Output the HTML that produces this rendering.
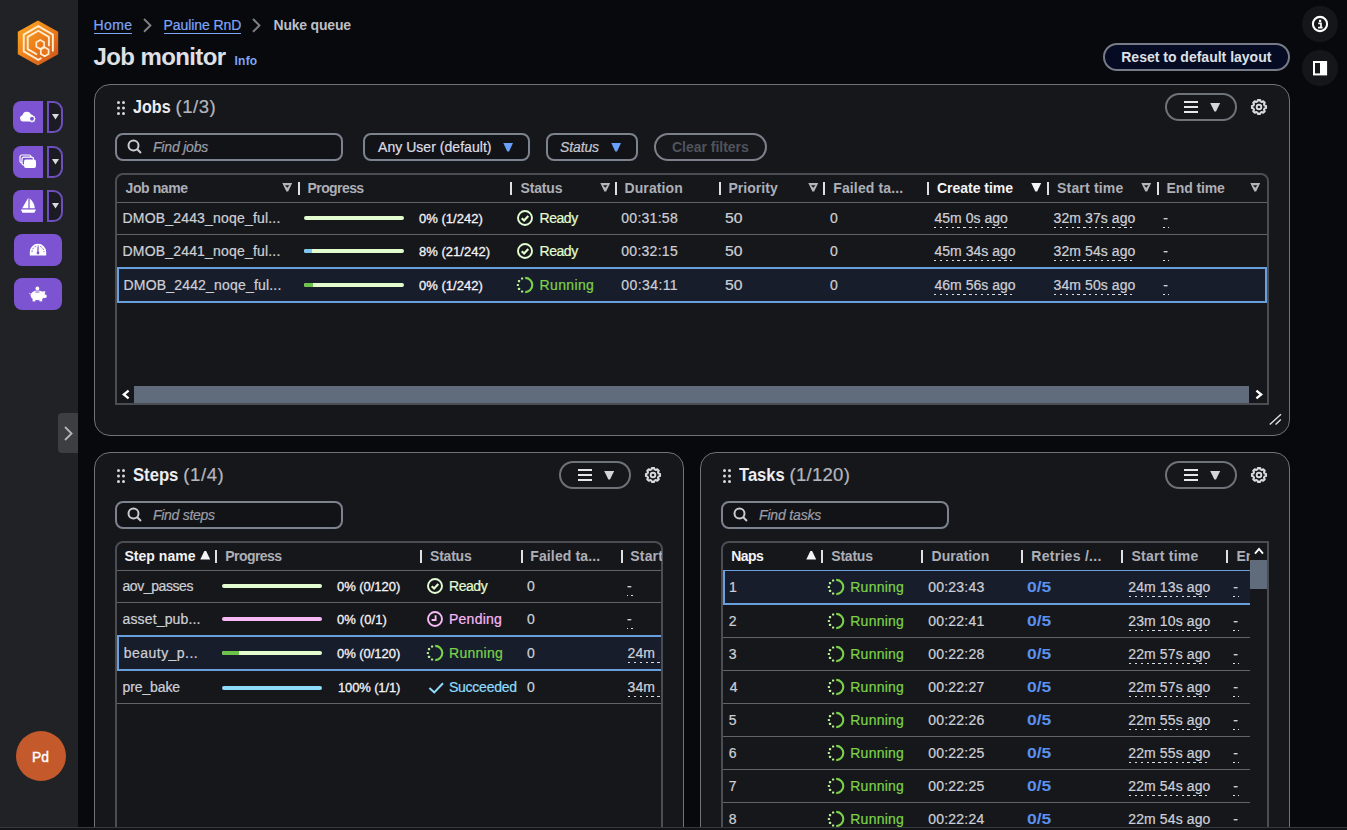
<!DOCTYPE html>
<html lang="en"><head><meta charset="utf-8"><title>Job monitor</title>
<style>
html,body{margin:0;padding:0}
body{width:1347px;height:830px;overflow:hidden;position:relative;background:#08090c;font-family:"Liberation Sans",sans-serif;color:#cdcfd6}
div,svg,span,a,h1,h2,button,nav,section,header,aside,main{position:absolute;box-sizing:border-box;margin:0;padding:0}
nav,section,header,aside,main{left:0;top:0}
button{background:transparent;border:0;font:inherit;color:inherit;appearance:none;-webkit-appearance:none;outline:0}
.t{white-space:nowrap;transform-origin:0 0;font-weight:400;text-decoration:none;-webkit-text-stroke:.22px}
.b{font-weight:700;-webkit-text-stroke:0}
svg{overflow:visible}
</style></head><body>
<aside>
<div style="left:0px;top:0px;width:78px;height:830px;background:#202226"></div>
<svg style="left:17px;top:20px;" width="42" height="46" viewBox="0 0 42 46"><defs><linearGradient id="lg" x1="0.1" y1="0.1" x2="0.9" y2="0.95"><stop offset="0" stop-color="#f8a324"/><stop offset="0.5" stop-color="#ec7d1a"/><stop offset="1" stop-color="#cf541b"/></linearGradient></defs>
<path d="M21 0.4L41.2 11.8V34.2L21 45.6L0.8 34.2V11.8Z" fill="url(#lg)"/>
<path d="M35.85 31.40L35.85 14.60L21.30 6.20L6.75 14.60L6.75 31.40L21.30 39.80L24.50 37.95" fill="none" stroke="#ffeccf" stroke-width="1.9"/>
<path d="M31.87 26.17L31.87 16.90L21.30 10.80L10.73 16.90L10.73 29.10L20.03 34.47" fill="none" stroke="#ffeccf" stroke-width="1.9"/>
<path d="M23.20 19.90L27.10 22.15L27.10 26.65L23.20 28.90L19.30 26.65L19.30 22.15Z" fill="none" stroke="#ffeccf" stroke-width="1.7"/>
<path d="M27.70 27.30L31.60 29.55L31.60 34.05L27.70 36.30L23.80 34.05L23.80 29.55Z" fill="#e7741b" stroke="#ffeccf" stroke-width="1.7"/></svg>
<button class="sb" style="left:13px;top:101px;width:30px;height:32px;background:#7c53d1;border-radius:8px 0 0 8px"><svg style="left:6px;top:8px;" width="19" height="15" viewBox="0 0 19 15"><path d="M3.9 12.6A3.2 3.2 0 0 1 3.5 6.3A4.5 4.5 0 0 1 11.9 5.3A3.3 3.3 0 0 1 14.6 8.4L14.6 12.6Z" fill="#ffffff"/><circle cx="13" cy="9.8" r="2.5" fill="#7c53d1" stroke="#ffffff" stroke-width="1.1"/><path d="M13 6.4V7.4M13 12.2V13.4M9.6 9.8H10.6M15.4 9.8H16.6M10.6 7.4L11.3 8.1M14.8 11.6L15.6 12.4M15.4 7.4L14.7 8.1M10.6 12.2L11.3 11.5" stroke="#ffffff" stroke-width="1.1"/></svg></button>
<button style="left:47px;top:101px;width:16px;height:32px;background:#1b1b23;border:2.4px solid #6c4fba;border-radius:0 9.5px 9.5px 0"><svg style="left:2.5px;top:11px;" width="7" height="6" viewBox="0 0 7 6"><path d="M0 0H7L3.5 5.5Z" fill="#d9d9e0"/></svg></button>
<button class="sb" style="left:13px;top:146px;width:30px;height:32px;background:#7c53d1;border-radius:8px 0 0 8px"><svg style="left:6px;top:8px;" width="18" height="15" viewBox="0 0 18 15"><rect x="1" y="1" width="11" height="8" rx="2" fill="none" stroke="#ffffff" stroke-width="1.2"/><rect x="3" y="3.2" width="11.5" height="8" rx="2" fill="#7c53d1" stroke="#ffffff" stroke-width="1.2"/><rect x="5" y="5.4" width="12" height="8.6" rx="2" fill="#ffffff"/></svg></button>
<button style="left:47px;top:146px;width:16px;height:32px;background:#1b1b23;border:2.4px solid #6c4fba;border-radius:0 9.5px 9.5px 0"><svg style="left:2.5px;top:11px;" width="7" height="6" viewBox="0 0 7 6"><path d="M0 0H7L3.5 5.5Z" fill="#d9d9e0"/></svg></button>
<button class="sb" style="left:13px;top:190px;width:30px;height:32px;background:#7c53d1;border-radius:8px 0 0 8px"><svg style="left:7px;top:7px;" width="17" height="17" viewBox="0 0 17 17"><path d="M8.4 0.6V11.2H2.2Z" fill="#ffffff"/><path d="M9.6 1.4C13 4 14.6 7.6 14.8 11.2H9.6Z" fill="#ffffff"/><path d="M0.8 12.6H16L14.4 15.8H2.4Z" fill="#ffffff"/></svg></button>
<button style="left:47px;top:190px;width:16px;height:32px;background:#1b1b23;border:2.4px solid #6c4fba;border-radius:0 9.5px 9.5px 0"><svg style="left:2.5px;top:11px;" width="7" height="6" viewBox="0 0 7 6"><path d="M0 0H7L3.5 5.5Z" fill="#d9d9e0"/></svg></button>
<button style="left:14px;top:234px;width:48px;height:32px;background:#7c53d1;border-radius:8px"><svg style="left:15px;top:9px;" width="18" height="13" viewBox="0 0 18 13"><path d="M0.8 12.4V9A8.2 8.2 0 0 1 17.2 9V12.4Z" fill="#ffffff"/><path d="M3 9A6 6 0 0 1 15 9" fill="none" stroke="#7c53d1" stroke-width="1" stroke-dasharray="1.6 1.3"/><path d="M9 4V10" stroke="#7c53d1" stroke-width="1.3"/><circle cx="9" cy="10" r="1.4" fill="#7c53d1"/></svg></button>
<button style="left:14px;top:278px;width:48px;height:32px;background:#7c53d1;border-radius:8px"><svg style="left:15px;top:8px;" width="18" height="16" viewBox="0 0 18 16"><circle cx="8.4" cy="2.4" r="1.9" fill="#ffffff"/><ellipse cx="8.6" cy="9.4" rx="7" ry="4.9" fill="#ffffff"/><path d="M13 5.6L16.4 5.2L15.6 8.2L17.6 9V11.6L15 12.2Z" fill="#ffffff"/><rect x="3.6" y="12.4" width="2.8" height="3" fill="#ffffff"/><rect x="10.4" y="12.4" width="2.8" height="3" fill="#ffffff"/><path d="M6.4 6H10.4" stroke="#7c53d1" stroke-width="1"/><path d="M1.6 8.4L0.4 7" stroke="#ffffff" stroke-width="1"/></svg></button>
<button style="left:58px;top:413px;width:20px;height:40px;background:#3c3e42;border-radius:4px 0 0 4px"><svg style="left:5.5px;top:12.6px;" width="9" height="15" viewBox="0 0 9 15"><path d="M1 1L7.6 7.5L1 14" fill="none" stroke="#b4b5bb" stroke-width="1.8"/></svg></button>
<div style="left:16px;top:731px;width:50px;height:50px;background:#c4592b;border-radius:50%"></div>
<span class="t" style="left:32.0px;top:750px;font-size:14px;line-height:14px;color:#ffffff;transform:scaleX(0.987);-webkit-text-stroke:0.4px #fff;">Pd</span>
</aside>
<header>
<nav>
<a class="t" style="left:93.5px;top:18px;font-size:14px;line-height:14px;color:#7ea4f4;letter-spacing:0.400px;">Home</a>
<div style="left:94px;top:33px;width:38px;height:1px;background:#7ea4f4"></div>
<svg style="left:143.3px;top:18px;" width="9" height="15" viewBox="0 0 9 15"><path d="M1 1L7.4 7.4L1 13.8" fill="none" stroke="#7d7f88" stroke-width="2"/></svg>
<a class="t" style="left:163.5px;top:18px;font-size:14px;line-height:14px;color:#7ea4f4;letter-spacing:-0.080px;">Pauline RnD</a>
<div style="left:164px;top:33px;width:77px;height:1px;background:#7ea4f4"></div>
<svg style="left:252px;top:18px;" width="9" height="15" viewBox="0 0 9 15"><path d="M1 1L7.4 7.4L1 13.8" fill="none" stroke="#7d7f88" stroke-width="2"/></svg>
<span class="t b" style="left:273.5px;top:18px;font-size:14px;line-height:14px;color:#bdbfc6;letter-spacing:-0.200px;">Nuke queue</span>
</nav>
<h1 class="t b" style="left:93.5px;top:45px;font-size:24px;line-height:24px;color:#dfe0e5;letter-spacing:-0.600px;">Job monitor</h1>
<a class="t b" style="left:234.5px;top:55px;font-size:12px;line-height:12px;color:#7ea4f4;letter-spacing:0.233px;">Info</a>
<button style="left:1103px;top:43px;width:187px;height:28px;border:2px solid #767b87;border-radius:14px;background:#050b22"></button>
<span class="t b" style="left:1121.25px;top:50px;font-size:14px;line-height:14px;color:#dfe0e6;">Reset to default layout</span>
<button style="left:1302px;top:6px;width:36px;height:36px;border-radius:50%;background:#15161a"><svg style="left:9.9px;top:9.7px;" width="16" height="16" viewBox="0 0 16 16"><circle cx="8" cy="8" r="7.1" fill="none" stroke="#fff" stroke-width="2.1"/><rect x="7" y="3.8" width="2.2" height="2.2" fill="#fff"/><path d="M6.2 7.4H9V11.4M6 11.6H10.6" stroke="#fff" stroke-width="1.7" fill="none"/></svg></button>
<button style="left:1302px;top:50px;width:36px;height:36px;border-radius:50%;background:#15161a"><svg style="left:10.9px;top:10.75px;" width="15" height="15" viewBox="0 0 15 15"><rect x="1" y="1" width="12.1" height="12.4" fill="none" stroke="#fff" stroke-width="2"/><rect x="7" y="1" width="6.1" height="12.4" fill="#fff"/></svg></button>
</header>
<section>
<div style="left:94px;top:84px;width:1196px;height:352px;background:#16171b;border:1px solid #707279;border-radius:16px"></div>
<svg style="left:117px;top:101px;" width="9" height="15" viewBox="0 0 9 15"><circle cx="1.5" cy="1.5" r="1.5" fill="#d5d6dc"/><circle cx="6.5" cy="1.5" r="1.5" fill="#d5d6dc"/><circle cx="1.5" cy="7.0" r="1.5" fill="#d5d6dc"/><circle cx="6.5" cy="7.0" r="1.5" fill="#d5d6dc"/><circle cx="1.5" cy="12.5" r="1.5" fill="#d5d6dc"/><circle cx="6.5" cy="12.5" r="1.5" fill="#d5d6dc"/></svg>
<h2 class="t b" style="left:132.5px;top:98px;font-size:18.5px;line-height:18.5px;color:#ececf1;transform:scaleX(0.871);">Jobs</h2>
<span class="t" style="left:175.5px;top:98px;font-size:18.5px;line-height:18.5px;color:#b4b6be;letter-spacing:0.550px;">(1/3)</span>
<button style="left:1165px;top:93px;width:72px;height:28px;border:2px solid #6e7279;border-radius:14px"><svg style="left:17px;top:6px;" width="14" height="12" viewBox="0 0 14 12"><path d="M0 1H14M0 6H14M0 11H14" stroke="#e6e7ec" stroke-width="2"/></svg><svg style="left:42.8px;top:8.2px;" width="10.4" height="8.6" viewBox="0 0 10.4 8.6"><path d="M0.2 0H10.2L6 8.6H4.4Z" fill="#d4d5db"/></svg></button>
<svg style="left:1250.3px;top:98px;" width="18" height="18" viewBox="0 0 18 18"><path d="M7.53 3.44 L7.88 1.94 L10.12 1.94 L10.47 3.44 L11.89 4.03 L13.20 3.22 L14.78 4.80 L13.97 6.11 L14.56 7.53 L16.06 7.88 L16.06 10.12 L14.56 10.47 L13.97 11.89 L14.78 13.20 L13.20 14.78 L11.89 13.97 L10.47 14.56 L10.12 16.06 L7.88 16.06 L7.53 14.56 L6.11 13.97 L4.80 14.78 L3.22 13.20 L4.03 11.89 L3.44 10.47 L1.94 10.12 L1.94 7.88 L3.44 7.53 L4.03 6.11 L3.22 4.80 L4.80 3.22 L6.11 4.03Z" fill="none" stroke="#d9dae0" stroke-width="2" stroke-linejoin="round"/><circle cx="9" cy="9" r="2.3" fill="none" stroke="#d9dae0" stroke-width="1.9"/></svg>
<div style="left:115px;top:133px;width:228px;height:28px;border:2px solid #7c828e;border-radius:8px;background:#121317"></div>
<svg style="left:127.3px;top:139.3px;" width="16" height="16" viewBox="0 0 16 16"><circle cx="6.5" cy="6.5" r="5" fill="none" stroke="#c9cbd2" stroke-width="2"/><path d="M10.2 10.2L14 14" stroke="#c9cbd2" stroke-width="2" stroke-linecap="butt"/></svg>
<span class="t" style="left:153.0px;top:140px;font-size:14px;line-height:14px;font-style:italic;color:#9b9da6;letter-spacing:-0.187px;">Find jobs</span>
<button style="left:363px;top:133px;width:167px;height:28px;border:2px solid #7c828e;border-radius:8px;background:#121317"></button>
<span class="t" style="left:378.0px;top:140px;font-size:14px;line-height:14px;color:#dcdde3;letter-spacing:0.041px;">Any User (default)</span>
<svg style="left:502.8px;top:142.8px;" width="10.3" height="8.4" viewBox="0 0 10.3 8.4"><path d="M0.3 0H10.0L6.050000000000001 8.4H4.25Z" fill="#68a0fc"/></svg>
<button style="left:546px;top:133px;width:92px;height:28px;border:2px solid #7c828e;border-radius:8px;background:#121317"></button>
<span class="t" style="left:560.0px;top:140px;font-size:14px;line-height:14px;font-style:italic;color:#c4c6ce;letter-spacing:-0.120px;">Status</span>
<svg style="left:610.8px;top:142.8px;" width="10.3" height="8.4" viewBox="0 0 10.3 8.4"><path d="M0.3 0H10.0L6.050000000000001 8.4H4.25Z" fill="#68a0fc"/></svg>
<button style="left:654px;top:133px;width:113px;height:28px;border:2px solid #7b808a;border-radius:14px"></button>
<span class="t b" style="left:672.0px;top:140px;font-size:14px;line-height:14px;color:#50535b;letter-spacing:-0.025px;">Clear filters</span>
<div style="left:115px;top:173px;width:1154px;height:232px;border:2px solid #4b4d54;border-radius:8px 8px 0 0;background:#16171b"></div>
<span class="t b" style="left:125.5px;top:181px;font-size:14px;line-height:14px;color:#adafb7;letter-spacing:-0.400px;">Job name</span>
<svg style="left:282.2px;top:182.8px;" width="10.5" height="8.5" viewBox="0 0 10.5 8.5"><path d="M0.3 0H10.2L6.15 8.5H4.35ZM3.05 2.3L5.25 4.7L7.45 2.3Z" fill="#b4b5bb" fill-rule="evenodd"/></svg>
<div style="left:297.5px;top:182px;width:2px;height:13px;background:#dfe0e6"></div>
<span class="t b" style="left:307.5px;top:181px;font-size:14px;line-height:14px;color:#adafb7;letter-spacing:-0.579px;">Progress</span>
<div style="left:510px;top:182px;width:2px;height:13px;background:#dfe0e6"></div>
<span class="t b" style="left:520.5px;top:181px;font-size:14px;line-height:14px;color:#adafb7;letter-spacing:-0.160px;">Status</span>
<svg style="left:600.2px;top:182.8px;" width="10.5" height="8.5" viewBox="0 0 10.5 8.5"><path d="M0.3 0H10.2L6.15 8.5H4.35ZM3.05 2.3L5.25 4.7L7.45 2.3Z" fill="#b4b5bb" fill-rule="evenodd"/></svg>
<div style="left:615px;top:182px;width:2px;height:13px;background:#dfe0e6"></div>
<span class="t b" style="left:624.5px;top:181px;font-size:14px;line-height:14px;color:#adafb7;letter-spacing:0.100px;">Duration</span>
<div style="left:719px;top:182px;width:2px;height:13px;background:#dfe0e6"></div>
<span class="t b" style="left:728.5px;top:181px;font-size:14px;line-height:14px;color:#adafb7;letter-spacing:0.029px;">Priority</span>
<svg style="left:808.2px;top:182.8px;" width="10.5" height="8.5" viewBox="0 0 10.5 8.5"><path d="M0.3 0H10.2L6.15 8.5H4.35ZM3.05 2.3L5.25 4.7L7.45 2.3Z" fill="#b4b5bb" fill-rule="evenodd"/></svg>
<div style="left:823px;top:182px;width:2px;height:13px;background:#dfe0e6"></div>
<span class="t b" style="left:833.25px;top:181px;font-size:14px;line-height:14px;color:#adafb7;letter-spacing:0.132px;">Failed ta...</span>
<div style="left:927px;top:182px;width:2px;height:13px;background:#dfe0e6"></div>
<span class="t b" style="left:937.0px;top:181px;font-size:14px;line-height:14px;color:#f4f4f7;letter-spacing:-0.030px;">Create time</span>
<svg style="left:1030.7px;top:182.8px;" width="10.5" height="8.5" viewBox="0 0 10.5 8.5"><path d="M0.3 0H10.2L6.15 8.5H4.35Z" fill="#f4f4f7"/></svg>
<div style="left:1046.5px;top:182px;width:2px;height:13px;background:#dfe0e6"></div>
<span class="t b" style="left:1057.0px;top:181px;font-size:14px;line-height:14px;color:#adafb7;letter-spacing:0.189px;">Start time</span>
<svg style="left:1141.2px;top:182.8px;" width="10.5" height="8.5" viewBox="0 0 10.5 8.5"><path d="M0.3 0H10.2L6.15 8.5H4.35ZM3.05 2.3L5.25 4.7L7.45 2.3Z" fill="#b4b5bb" fill-rule="evenodd"/></svg>
<div style="left:1156.75px;top:182px;width:2px;height:13px;background:#dfe0e6"></div>
<span class="t b" style="left:1166.5px;top:181px;font-size:14px;line-height:14px;color:#adafb7;letter-spacing:-0.114px;">End time</span>
<svg style="left:1250.2px;top:182.8px;" width="10.5" height="8.5" viewBox="0 0 10.5 8.5"><path d="M0.3 0H10.2L6.15 8.5H4.35ZM3.05 2.3L5.25 4.7L7.45 2.3Z" fill="#b4b5bb" fill-rule="evenodd"/></svg>
<div style="left:117px;top:202px;width:1150px;height:1px;background:#62646b"></div>
<div style="left:117px;top:234px;width:1150px;height:1px;background:#62646b"></div>
<div style="left:117px;top:267px;width:1150px;height:36px;background:#181d2c;border:2px solid #689fdc"></div>
<span class="t" style="left:122.5px;top:211px;font-size:14px;line-height:14px;letter-spacing:0.185px;">DMOB_2443_noqe_ful...</span>
<div style="left:304px;top:216px;width:100px;height:4px;border-radius:2px;background:#e2fccf;overflow:hidden"></div>
<span class="t" style="left:419.0px;top:212px;font-size:13px;line-height:13px;color:#f4f4f7;letter-spacing:0.022px;-webkit-text-stroke:0.3px #f4f4f7;">0% (1/242)</span>
<svg style="left:517px;top:209.5px;" width="16" height="16" viewBox="0 0 16 16"><circle cx="8" cy="8" r="7" fill="none" stroke="#e2fccf" stroke-width="1.9"/><path d="M4.7 8.2L7.1 10.5L11.3 5.9" fill="none" stroke="#e2fccf" stroke-width="2.2" stroke-linejoin="miter"/></svg>
<span class="t" style="left:539.5px;top:211px;font-size:14px;line-height:14px;color:#e2fccf;letter-spacing:-0.450px;">Ready</span>
<span class="t" style="left:621.25px;top:211px;font-size:14px;line-height:14px;letter-spacing:0.279px;">00:31:58</span>
<span class="t" style="left:725.25px;top:211px;font-size:14px;line-height:14px;transform:scaleX(1.121);">50</span>
<span class="t" style="left:830.0px;top:211px;font-size:14px;line-height:14px;">0</span>
<span class="t" style="left:934.5px;top:211px;font-size:14px;line-height:14px;letter-spacing:0.022px;">45m 0s ago</span>
<div style="left:934px;top:227px;width:74px;height:1px;background:repeating-linear-gradient(90deg,#dcdee5 0 2.4px,transparent 2.4px 5.85px)"></div>
<span class="t" style="left:1053.5px;top:211px;font-size:14px;line-height:14px;letter-spacing:0.095px;">32m 37s ago</span>
<div style="left:1054px;top:227px;width:81.75px;height:1px;background:repeating-linear-gradient(90deg,#dcdee5 0 2.4px,transparent 2.4px 5.85px)"></div>
<span class="t" style="left:1163.25px;top:211px;font-size:14px;line-height:14px;">-</span>
<div style="left:1163.45px;top:227px;width:1.3px;height:1px;background:#dcdee5"></div><div style="left:1167.65px;top:227px;width:1.3px;height:1px;background:#dcdee5"></div>
<span class="t" style="left:122.5px;top:244px;font-size:14px;line-height:14px;letter-spacing:0.185px;">DMOB_2441_noqe_ful...</span>
<div style="left:304px;top:249px;width:100px;height:4px;border-radius:2px;background:#e2fccf;overflow:hidden"><div style="left:0;top:0;width:8px;height:4px;background:#7cc4f2"></div></div>
<span class="t" style="left:419.0px;top:245px;font-size:13px;line-height:13px;color:#f4f4f7;letter-spacing:0.020px;-webkit-text-stroke:0.3px #f4f4f7;">8% (21/242)</span>
<svg style="left:517px;top:242.5px;" width="16" height="16" viewBox="0 0 16 16"><circle cx="8" cy="8" r="7" fill="none" stroke="#e2fccf" stroke-width="1.9"/><path d="M4.7 8.2L7.1 10.5L11.3 5.9" fill="none" stroke="#e2fccf" stroke-width="2.2" stroke-linejoin="miter"/></svg>
<span class="t" style="left:539.5px;top:244px;font-size:14px;line-height:14px;color:#e2fccf;letter-spacing:-0.450px;">Ready</span>
<span class="t" style="left:621.25px;top:244px;font-size:14px;line-height:14px;letter-spacing:0.279px;">00:32:15</span>
<span class="t" style="left:725.25px;top:244px;font-size:14px;line-height:14px;transform:scaleX(1.121);">50</span>
<span class="t" style="left:830.0px;top:244px;font-size:14px;line-height:14px;">0</span>
<span class="t" style="left:934.5px;top:244px;font-size:14px;line-height:14px;letter-spacing:0.020px;">45m 34s ago</span>
<div style="left:934px;top:260px;width:82px;height:1px;background:repeating-linear-gradient(90deg,#dcdee5 0 2.4px,transparent 2.4px 5.85px)"></div>
<span class="t" style="left:1053.5px;top:244px;font-size:14px;line-height:14px;letter-spacing:0.095px;">32m 54s ago</span>
<div style="left:1054px;top:260px;width:81.75px;height:1px;background:repeating-linear-gradient(90deg,#dcdee5 0 2.4px,transparent 2.4px 5.85px)"></div>
<span class="t" style="left:1163.25px;top:244px;font-size:14px;line-height:14px;">-</span>
<div style="left:1163.45px;top:260px;width:1.3px;height:1px;background:#dcdee5"></div><div style="left:1167.65px;top:260px;width:1.3px;height:1px;background:#dcdee5"></div>
<span class="t" style="left:123.5px;top:278px;font-size:14px;line-height:14px;letter-spacing:0.185px;">DMOB_2442_noqe_ful...</span>
<div style="left:304px;top:283px;width:100px;height:4px;border-radius:2px;background:#e2fccf;overflow:hidden"><div style="left:0;top:0;width:9px;height:4px;background:#6cc349"></div></div>
<span class="t" style="left:419.0px;top:279px;font-size:13px;line-height:13px;color:#f4f4f7;letter-spacing:0.022px;-webkit-text-stroke:0.3px #f4f4f7;">0% (1/242)</span>
<svg style="left:517.4px;top:277.0px;" width="16" height="16" viewBox="0 0 16 16"><path d="M8.2 0.90A7.1 7.1 0 0 1 8.2 15.10" fill="none" stroke="#7bd148" stroke-width="2.1"/><rect x="4.01" y="13.39" width="2.2" height="2.2" rx="0.5" fill="#b9ee92"/><rect x="0.95" y="10.77" width="2.2" height="2.2" rx="0.5" fill="#b9ee92"/><rect x="-0.20" y="6.90" width="2.2" height="2.2" rx="0.5" fill="#b9ee92"/><rect x="0.95" y="3.03" width="2.2" height="2.2" rx="0.5" fill="#b9ee92"/><rect x="4.01" y="0.41" width="2.2" height="2.2" rx="0.5" fill="#b9ee92"/></svg>
<span class="t" style="left:539.5px;top:278px;font-size:14px;line-height:14px;color:#7bd148;letter-spacing:0.367px;">Running</span>
<span class="t" style="left:621.25px;top:278px;font-size:14px;line-height:14px;letter-spacing:0.421px;">00:34:11</span>
<span class="t" style="left:725.25px;top:278px;font-size:14px;line-height:14px;transform:scaleX(1.121);">50</span>
<span class="t" style="left:830.0px;top:278px;font-size:14px;line-height:14px;">0</span>
<span class="t" style="left:934.5px;top:278px;font-size:14px;line-height:14px;letter-spacing:0.020px;">46m 56s ago</span>
<div style="left:934px;top:294px;width:82px;height:1px;background:repeating-linear-gradient(90deg,#dcdee5 0 2.4px,transparent 2.4px 5.85px)"></div>
<span class="t" style="left:1053.5px;top:278px;font-size:14px;line-height:14px;letter-spacing:0.095px;">34m 50s ago</span>
<div style="left:1054px;top:294px;width:81.75px;height:1px;background:repeating-linear-gradient(90deg,#dcdee5 0 2.4px,transparent 2.4px 5.85px)"></div>
<span class="t" style="left:1163.25px;top:278px;font-size:14px;line-height:14px;">-</span>
<div style="left:1163.45px;top:294px;width:1.3px;height:1px;background:#dcdee5"></div><div style="left:1167.65px;top:294px;width:1.3px;height:1px;background:#dcdee5"></div>
<div style="left:134px;top:386px;width:1115px;height:17px;background:#606c7c"></div>
<svg style="left:121.5px;top:390px;" width="8" height="9" viewBox="0 0 8 9"><path d="M6.6 0.6L1.8 4.5L6.6 8.4" fill="none" stroke="#fff" stroke-width="2.3"/></svg>
<svg style="left:1255px;top:390px;" width="8" height="9" viewBox="0 0 8 9"><path d="M1.4 0.6L6.2 4.5L1.4 8.4" fill="none" stroke="#fff" stroke-width="2.3"/></svg>
<svg style="left:1269px;top:413px;" width="14" height="13" viewBox="0 0 14 13"><path d="M0.8 11.6L12 1.2M6.6 11.6L11.8 6.6" stroke="#e0e1e6" stroke-width="1.4" fill="none"/></svg>
</section>
<section>
<div style="left:94px;top:452px;width:590px;height:400px;background:#16171b;border:1px solid #707279;border-radius:16px"></div>
<svg style="left:117px;top:469px;" width="9" height="15" viewBox="0 0 9 15"><circle cx="1.5" cy="1.5" r="1.5" fill="#d5d6dc"/><circle cx="6.5" cy="1.5" r="1.5" fill="#d5d6dc"/><circle cx="1.5" cy="7.0" r="1.5" fill="#d5d6dc"/><circle cx="6.5" cy="7.0" r="1.5" fill="#d5d6dc"/><circle cx="1.5" cy="12.5" r="1.5" fill="#d5d6dc"/><circle cx="6.5" cy="12.5" r="1.5" fill="#d5d6dc"/></svg>
<h2 class="t b" style="left:133.25px;top:466px;font-size:18.5px;line-height:18.5px;color:#ececf1;transform:scaleX(0.901);">Steps</h2>
<span class="t" style="left:183.25px;top:466px;font-size:18.5px;line-height:18.5px;color:#b4b6be;letter-spacing:0.613px;">(1/4)</span>
<button style="left:559px;top:461px;width:72px;height:28px;border:2px solid #6e7279;border-radius:14px"><svg style="left:17px;top:6px;" width="14" height="12" viewBox="0 0 14 12"><path d="M0 1H14M0 6H14M0 11H14" stroke="#e6e7ec" stroke-width="2"/></svg><svg style="left:42.8px;top:8.2px;" width="10.4" height="8.6" viewBox="0 0 10.4 8.6"><path d="M0.2 0H10.2L6 8.6H4.4Z" fill="#d4d5db"/></svg></button>
<svg style="left:644.3px;top:466px;" width="18" height="18" viewBox="0 0 18 18"><path d="M7.53 3.44 L7.88 1.94 L10.12 1.94 L10.47 3.44 L11.89 4.03 L13.20 3.22 L14.78 4.80 L13.97 6.11 L14.56 7.53 L16.06 7.88 L16.06 10.12 L14.56 10.47 L13.97 11.89 L14.78 13.20 L13.20 14.78 L11.89 13.97 L10.47 14.56 L10.12 16.06 L7.88 16.06 L7.53 14.56 L6.11 13.97 L4.80 14.78 L3.22 13.20 L4.03 11.89 L3.44 10.47 L1.94 10.12 L1.94 7.88 L3.44 7.53 L4.03 6.11 L3.22 4.80 L4.80 3.22 L6.11 4.03Z" fill="none" stroke="#d9dae0" stroke-width="2" stroke-linejoin="round"/><circle cx="9" cy="9" r="2.3" fill="none" stroke="#d9dae0" stroke-width="1.9"/></svg>
<div style="left:115px;top:501px;width:228px;height:28px;border:2px solid #7c828e;border-radius:8px;background:#121317"></div>
<svg style="left:127.3px;top:507.3px;" width="16" height="16" viewBox="0 0 16 16"><circle cx="6.5" cy="6.5" r="5" fill="none" stroke="#c9cbd2" stroke-width="2"/><path d="M10.2 10.2L14 14" stroke="#c9cbd2" stroke-width="2" stroke-linecap="butt"/></svg>
<span class="t" style="left:153.0px;top:508px;font-size:14px;line-height:14px;font-style:italic;color:#9b9da6;letter-spacing:-0.278px;">Find steps</span>
<div style="left:115px;top:541px;width:548px;height:300px;border:2px solid #4b4d54;border-radius:8px 8px 0 0;background:#16171b"></div>
<span class="t b" style="left:124.5px;top:549px;font-size:14px;line-height:14px;color:#f4f4f7;letter-spacing:0.025px;">Step name</span>
<svg style="left:199.8px;top:551.2px;" width="10.5" height="8.5" viewBox="0 0 10.5 8.5"><path d="M0.3 8.5H10.2L6.15 0H4.35Z" fill="#f4f4f7"/></svg>
<div style="left:215px;top:550px;width:2px;height:13px;background:#dfe0e6"></div>
<span class="t b" style="left:225.25px;top:549px;font-size:14px;line-height:14px;color:#adafb7;letter-spacing:-0.543px;">Progress</span>
<div style="left:420px;top:550px;width:2px;height:13px;background:#dfe0e6"></div>
<span class="t b" style="left:430.0px;top:549px;font-size:14px;line-height:14px;color:#adafb7;letter-spacing:-0.210px;">Status</span>
<div style="left:520.5px;top:550px;width:2px;height:13px;background:#dfe0e6"></div>
<span class="t b" style="left:530.25px;top:549px;font-size:14px;line-height:14px;color:#adafb7;letter-spacing:0.132px;">Failed ta...</span>
<div style="left:620.5px;top:550px;width:2px;height:13px;background:#dfe0e6"></div>
<div style="left:620px;top:543px;width:42px;height:27px;overflow:hidden"><span class="t b" style="left:10.25px;top:6px;font-size:14px;line-height:14px;color:#adafb7;letter-spacing:0.189px;">Start time</span></div>
<div style="left:117px;top:570px;width:544px;height:1px;background:#62646b"></div>
<div style="left:117px;top:602px;width:544px;height:1px;background:#62646b"></div>
<div style="left:117px;top:703px;width:544px;height:1px;background:#62646b"></div>
<div style="left:117px;top:635px;width:544px;height:36px;background:#181d2c;border:2px solid #689fdc;border-right:0"></div>
<span class="t" style="left:122.5px;top:579px;font-size:14px;line-height:14px;letter-spacing:-0.422px;">aov_passes</span>
<div style="left:222px;top:584px;width:99.7px;height:4px;border-radius:2px;background:#e2fccf;overflow:hidden"></div>
<span class="t" style="left:337.0px;top:580px;font-size:13px;line-height:13px;color:#f4f4f7;letter-spacing:-0.033px;-webkit-text-stroke:0.3px #f4f4f7;">0% (0/120)</span>
<svg style="left:427px;top:577.5px;" width="16" height="16" viewBox="0 0 16 16"><circle cx="8" cy="8" r="7" fill="none" stroke="#e2fccf" stroke-width="1.9"/><path d="M4.7 8.2L7.1 10.5L11.3 5.9" fill="none" stroke="#e2fccf" stroke-width="2.2" stroke-linejoin="miter"/></svg>
<span class="t" style="left:449.0px;top:579px;font-size:14px;line-height:14px;color:#e2fccf;letter-spacing:-0.450px;">Ready</span>
<span class="t" style="left:527.0px;top:579px;font-size:14px;line-height:14px;">0</span>
<span class="t" style="left:627.0px;top:579px;font-size:14px;line-height:14px;">-</span>
<div style="left:627.2px;top:595px;width:1.3px;height:1px;background:#dcdee5"></div><div style="left:631.4px;top:595px;width:1.3px;height:1px;background:#dcdee5"></div>
<span class="t" style="left:122.5px;top:612px;font-size:14px;line-height:14px;letter-spacing:0.155px;">asset_pub...</span>
<div style="left:222px;top:617px;width:99.7px;height:4px;border-radius:2px;background:#f6b9f6;overflow:hidden"></div>
<span class="t" style="left:337.0px;top:613px;font-size:13px;line-height:13px;color:#f4f4f7;letter-spacing:0.100px;-webkit-text-stroke:0.3px #f4f4f7;">0% (0/1)</span>
<svg style="left:427px;top:610.5px;" width="16" height="16" viewBox="0 0 16 16"><circle cx="8" cy="8" r="7" fill="none" stroke="#f6b9f6" stroke-width="1.9"/><path d="M8.6 4.2V9H4.6" fill="none" stroke="#f6b9f6" stroke-width="1.9" stroke-linejoin="miter"/></svg>
<span class="t" style="left:449.0px;top:612px;font-size:14px;line-height:14px;color:#f6b9f6;letter-spacing:0.242px;">Pending</span>
<span class="t" style="left:527.0px;top:612px;font-size:14px;line-height:14px;">0</span>
<span class="t" style="left:627.0px;top:612px;font-size:14px;line-height:14px;">-</span>
<div style="left:627.2px;top:628px;width:1.3px;height:1px;background:#dcdee5"></div><div style="left:631.4px;top:628px;width:1.3px;height:1px;background:#dcdee5"></div>
<span class="t" style="left:123.75px;top:646px;font-size:14px;line-height:14px;letter-spacing:0.470px;">beauty_p...</span>
<div style="left:222px;top:651px;width:99.7px;height:4px;border-radius:2px;background:#e2fccf;overflow:hidden"><div style="left:0;top:0;width:17px;height:4px;background:#6cc349"></div></div>
<span class="t" style="left:337.0px;top:647px;font-size:13px;line-height:13px;color:#f4f4f7;letter-spacing:-0.033px;-webkit-text-stroke:0.3px #f4f4f7;">0% (0/120)</span>
<svg style="left:427.4px;top:645.0px;" width="16" height="16" viewBox="0 0 16 16"><path d="M8.2 0.90A7.1 7.1 0 0 1 8.2 15.10" fill="none" stroke="#7bd148" stroke-width="2.1"/><rect x="4.01" y="13.39" width="2.2" height="2.2" rx="0.5" fill="#b9ee92"/><rect x="0.95" y="10.77" width="2.2" height="2.2" rx="0.5" fill="#b9ee92"/><rect x="-0.20" y="6.90" width="2.2" height="2.2" rx="0.5" fill="#b9ee92"/><rect x="0.95" y="3.03" width="2.2" height="2.2" rx="0.5" fill="#b9ee92"/><rect x="4.01" y="0.41" width="2.2" height="2.2" rx="0.5" fill="#b9ee92"/></svg>
<span class="t" style="left:449.0px;top:646px;font-size:14px;line-height:14px;color:#7bd148;letter-spacing:0.283px;">Running</span>
<span class="t" style="left:527.0px;top:646px;font-size:14px;line-height:14px;">0</span>
<div style="left:620px;top:642px;width:40px;height:24px;overflow:hidden"><span class="t" style="left:7.5px;top:4px;font-size:14px;line-height:14px;letter-spacing:0.120px;">24m 13s ago</span><div style="left:8px;top:20px;width:82px;height:1px;background:repeating-linear-gradient(90deg,#dcdee5 0 2.4px,transparent 2.4px 5.85px)"></div></div>
<span class="t" style="left:122.5px;top:680px;font-size:14px;line-height:14px;letter-spacing:-0.114px;">pre_bake</span>
<div style="left:222px;top:685.5px;width:99.7px;height:4px;border-radius:2px;background:#8fdcfb;overflow:hidden"></div>
<span class="t" style="left:338.0px;top:681px;font-size:13px;line-height:13px;color:#f4f4f7;letter-spacing:-0.144px;-webkit-text-stroke:0.3px #f4f4f7;">100% (1/1)</span>
<svg style="left:427.5px;top:678.5px;" width="16" height="16" viewBox="0 0 16 16"><path d="M1.4 8.9L6.3 13.4L15 4.3" fill="none" stroke="#8fdcfb" stroke-width="2" stroke-linejoin="miter"/></svg>
<span class="t" style="left:449.0px;top:680px;font-size:14px;line-height:14px;color:#8fdcfb;letter-spacing:-0.256px;">Succeeded</span>
<span class="t" style="left:527.0px;top:680px;font-size:14px;line-height:14px;">0</span>
<div style="left:620px;top:676px;width:40px;height:24px;overflow:hidden"><span class="t" style="left:7.5px;top:4px;font-size:14px;line-height:14px;letter-spacing:0.120px;">34m 12s ago</span><div style="left:8px;top:20px;width:82px;height:1px;background:repeating-linear-gradient(90deg,#dcdee5 0 2.4px,transparent 2.4px 5.85px)"></div></div>
</section>
<section>
<div style="left:700px;top:452px;width:590px;height:400px;background:#16171b;border:1px solid #707279;border-radius:16px"></div>
<svg style="left:723px;top:469px;" width="9" height="15" viewBox="0 0 9 15"><circle cx="1.5" cy="1.5" r="1.5" fill="#d5d6dc"/><circle cx="6.5" cy="1.5" r="1.5" fill="#d5d6dc"/><circle cx="1.5" cy="7.0" r="1.5" fill="#d5d6dc"/><circle cx="6.5" cy="7.0" r="1.5" fill="#d5d6dc"/><circle cx="1.5" cy="12.5" r="1.5" fill="#d5d6dc"/><circle cx="6.5" cy="12.5" r="1.5" fill="#d5d6dc"/></svg>
<h2 class="t b" style="left:739.25px;top:466px;font-size:18.5px;line-height:18.5px;color:#ececf1;transform:scaleX(0.896);">Tasks</h2>
<span class="t" style="left:789.5px;top:466px;font-size:18.5px;line-height:18.5px;color:#b4b6be;letter-spacing:0.283px;">(1/120)</span>
<button style="left:1165px;top:461px;width:72px;height:28px;border:2px solid #6e7279;border-radius:14px"><svg style="left:17px;top:6px;" width="14" height="12" viewBox="0 0 14 12"><path d="M0 1H14M0 6H14M0 11H14" stroke="#e6e7ec" stroke-width="2"/></svg><svg style="left:42.8px;top:8.2px;" width="10.4" height="8.6" viewBox="0 0 10.4 8.6"><path d="M0.2 0H10.2L6 8.6H4.4Z" fill="#d4d5db"/></svg></button>
<svg style="left:1250.3px;top:466px;" width="18" height="18" viewBox="0 0 18 18"><path d="M7.53 3.44 L7.88 1.94 L10.12 1.94 L10.47 3.44 L11.89 4.03 L13.20 3.22 L14.78 4.80 L13.97 6.11 L14.56 7.53 L16.06 7.88 L16.06 10.12 L14.56 10.47 L13.97 11.89 L14.78 13.20 L13.20 14.78 L11.89 13.97 L10.47 14.56 L10.12 16.06 L7.88 16.06 L7.53 14.56 L6.11 13.97 L4.80 14.78 L3.22 13.20 L4.03 11.89 L3.44 10.47 L1.94 10.12 L1.94 7.88 L3.44 7.53 L4.03 6.11 L3.22 4.80 L4.80 3.22 L6.11 4.03Z" fill="none" stroke="#d9dae0" stroke-width="2" stroke-linejoin="round"/><circle cx="9" cy="9" r="2.3" fill="none" stroke="#d9dae0" stroke-width="1.9"/></svg>
<div style="left:721px;top:501px;width:228px;height:28px;border:2px solid #7c828e;border-radius:8px;background:#121317"></div>
<svg style="left:733.3px;top:507.3px;" width="16" height="16" viewBox="0 0 16 16"><circle cx="6.5" cy="6.5" r="5" fill="none" stroke="#c9cbd2" stroke-width="2"/><path d="M10.2 10.2L14 14" stroke="#c9cbd2" stroke-width="2" stroke-linecap="butt"/></svg>
<span class="t" style="left:759.0px;top:508px;font-size:14px;line-height:14px;font-style:italic;color:#9b9da6;letter-spacing:-0.167px;">Find tasks</span>
<div style="left:721px;top:541px;width:548px;height:300px;border:2px solid #4b4d54;border-radius:8px 0 0 0;background:#16171b"></div>
<span class="t b" style="left:731.25px;top:549px;font-size:14px;line-height:14px;color:#f4f4f7;letter-spacing:-0.600px;">Naps</span>
<svg style="left:805.8px;top:551.2px;" width="10.5" height="8.5" viewBox="0 0 10.5 8.5"><path d="M0.3 8.5H10.2L6.15 0H4.35Z" fill="#f4f4f7"/></svg>
<div style="left:821px;top:550px;width:2px;height:13px;background:#dfe0e6"></div>
<span class="t b" style="left:831.25px;top:549px;font-size:14px;line-height:14px;color:#adafb7;letter-spacing:-0.210px;">Status</span>
<div style="left:921px;top:550px;width:2px;height:13px;background:#dfe0e6"></div>
<span class="t b" style="left:931.5px;top:549px;font-size:14px;line-height:14px;color:#adafb7;letter-spacing:0.029px;">Duration</span>
<div style="left:1021px;top:550px;width:2px;height:13px;background:#dfe0e6"></div>
<span class="t b" style="left:1031.25px;top:549px;font-size:14px;line-height:14px;color:#adafb7;letter-spacing:0.291px;">Retries /...</span>
<div style="left:1121.25px;top:550px;width:2px;height:13px;background:#dfe0e6"></div>
<span class="t b" style="left:1131.5px;top:549px;font-size:14px;line-height:14px;color:#adafb7;letter-spacing:0.244px;">Start time</span>
<div style="left:1225.8px;top:550px;width:2px;height:13px;background:#dfe0e6"></div>
<div style="left:1230px;top:543px;width:20px;height:27px;overflow:hidden"><span class="t b" style="left:6.5px;top:6px;font-size:14px;line-height:14px;color:#adafb7;letter-spacing:-0.114px;">End time</span></div>
<div style="left:723px;top:570px;width:527px;height:35px;background:#181d2c;border:2px solid #689fdc;border-top-width:1px;border-right:0"></div>
<div style="left:723px;top:637px;width:527px;height:1px;background:#62646b"></div>
<div style="left:723px;top:670px;width:527px;height:1px;background:#62646b"></div>
<div style="left:723px;top:703px;width:527px;height:1px;background:#62646b"></div>
<div style="left:723px;top:736px;width:527px;height:1px;background:#62646b"></div>
<div style="left:723px;top:769px;width:527px;height:1px;background:#62646b"></div>
<div style="left:723px;top:802px;width:527px;height:1px;background:#62646b"></div>
<span class="t" style="left:729.0px;top:580px;font-size:14px;line-height:14px;">1</span>
<svg style="left:827.9px;top:579.0px;" width="16" height="16" viewBox="0 0 16 16"><path d="M8.2 0.90A7.1 7.1 0 0 1 8.2 15.10" fill="none" stroke="#7bd148" stroke-width="2.1"/><rect x="4.01" y="13.39" width="2.2" height="2.2" rx="0.5" fill="#b9ee92"/><rect x="0.95" y="10.77" width="2.2" height="2.2" rx="0.5" fill="#b9ee92"/><rect x="-0.20" y="6.90" width="2.2" height="2.2" rx="0.5" fill="#b9ee92"/><rect x="0.95" y="3.03" width="2.2" height="2.2" rx="0.5" fill="#b9ee92"/><rect x="4.01" y="0.41" width="2.2" height="2.2" rx="0.5" fill="#b9ee92"/></svg>
<span class="t" style="left:850.25px;top:580px;font-size:14px;line-height:14px;color:#7bd148;letter-spacing:0.242px;">Running</span>
<span class="t" style="left:928.25px;top:580px;font-size:14px;line-height:14px;letter-spacing:0.207px;">00:23:43</span>
<span class="t b" style="left:1027.25px;top:580px;font-size:14px;line-height:14px;color:#5b90ee;transform:scaleX(1.247);">0/5</span>
<span class="t" style="left:1128.25px;top:580px;font-size:14px;line-height:14px;letter-spacing:0.120px;">24m 13s ago</span>
<div style="left:1128.75px;top:596px;width:82.0px;height:1px;background:repeating-linear-gradient(90deg,#dcdee5 0 2.4px,transparent 2.4px 5.85px)"></div>
<span class="t" style="left:1233.25px;top:580px;font-size:14px;line-height:14px;">-</span>
<div style="left:1233.45px;top:596px;width:1.3px;height:1px;background:#dcdee5"></div><div style="left:1237.65px;top:596px;width:1.3px;height:1px;background:#dcdee5"></div>
<span class="t" style="left:728.75px;top:614px;font-size:14px;line-height:14px;">2</span>
<svg style="left:827.9px;top:613.0px;" width="16" height="16" viewBox="0 0 16 16"><path d="M8.2 0.90A7.1 7.1 0 0 1 8.2 15.10" fill="none" stroke="#7bd148" stroke-width="2.1"/><rect x="4.01" y="13.39" width="2.2" height="2.2" rx="0.5" fill="#b9ee92"/><rect x="0.95" y="10.77" width="2.2" height="2.2" rx="0.5" fill="#b9ee92"/><rect x="-0.20" y="6.90" width="2.2" height="2.2" rx="0.5" fill="#b9ee92"/><rect x="0.95" y="3.03" width="2.2" height="2.2" rx="0.5" fill="#b9ee92"/><rect x="4.01" y="0.41" width="2.2" height="2.2" rx="0.5" fill="#b9ee92"/></svg>
<span class="t" style="left:850.25px;top:614px;font-size:14px;line-height:14px;color:#7bd148;letter-spacing:0.242px;">Running</span>
<span class="t" style="left:928.25px;top:614px;font-size:14px;line-height:14px;letter-spacing:0.207px;">00:22:41</span>
<span class="t b" style="left:1027.25px;top:614px;font-size:14px;line-height:14px;color:#5b90ee;transform:scaleX(1.247);">0/5</span>
<span class="t" style="left:1128.25px;top:614px;font-size:14px;line-height:14px;letter-spacing:0.120px;">23m 10s ago</span>
<div style="left:1128.75px;top:630px;width:82.0px;height:1px;background:repeating-linear-gradient(90deg,#dcdee5 0 2.4px,transparent 2.4px 5.85px)"></div>
<span class="t" style="left:1233.25px;top:614px;font-size:14px;line-height:14px;">-</span>
<div style="left:1233.45px;top:630px;width:1.3px;height:1px;background:#dcdee5"></div><div style="left:1237.65px;top:630px;width:1.3px;height:1px;background:#dcdee5"></div>
<span class="t" style="left:728.75px;top:647px;font-size:14px;line-height:14px;">3</span>
<svg style="left:827.9px;top:646.0px;" width="16" height="16" viewBox="0 0 16 16"><path d="M8.2 0.90A7.1 7.1 0 0 1 8.2 15.10" fill="none" stroke="#7bd148" stroke-width="2.1"/><rect x="4.01" y="13.39" width="2.2" height="2.2" rx="0.5" fill="#b9ee92"/><rect x="0.95" y="10.77" width="2.2" height="2.2" rx="0.5" fill="#b9ee92"/><rect x="-0.20" y="6.90" width="2.2" height="2.2" rx="0.5" fill="#b9ee92"/><rect x="0.95" y="3.03" width="2.2" height="2.2" rx="0.5" fill="#b9ee92"/><rect x="4.01" y="0.41" width="2.2" height="2.2" rx="0.5" fill="#b9ee92"/></svg>
<span class="t" style="left:850.25px;top:647px;font-size:14px;line-height:14px;color:#7bd148;letter-spacing:0.242px;">Running</span>
<span class="t" style="left:928.25px;top:647px;font-size:14px;line-height:14px;letter-spacing:0.207px;">00:22:28</span>
<span class="t b" style="left:1027.25px;top:647px;font-size:14px;line-height:14px;color:#5b90ee;transform:scaleX(1.247);">0/5</span>
<span class="t" style="left:1128.25px;top:647px;font-size:14px;line-height:14px;letter-spacing:0.120px;">22m 57s ago</span>
<div style="left:1128.75px;top:663px;width:82.0px;height:1px;background:repeating-linear-gradient(90deg,#dcdee5 0 2.4px,transparent 2.4px 5.85px)"></div>
<span class="t" style="left:1233.25px;top:647px;font-size:14px;line-height:14px;">-</span>
<div style="left:1233.45px;top:663px;width:1.3px;height:1px;background:#dcdee5"></div><div style="left:1237.65px;top:663px;width:1.3px;height:1px;background:#dcdee5"></div>
<span class="t" style="left:729.75px;top:680px;font-size:14px;line-height:14px;">4</span>
<svg style="left:827.9px;top:679.0px;" width="16" height="16" viewBox="0 0 16 16"><path d="M8.2 0.90A7.1 7.1 0 0 1 8.2 15.10" fill="none" stroke="#7bd148" stroke-width="2.1"/><rect x="4.01" y="13.39" width="2.2" height="2.2" rx="0.5" fill="#b9ee92"/><rect x="0.95" y="10.77" width="2.2" height="2.2" rx="0.5" fill="#b9ee92"/><rect x="-0.20" y="6.90" width="2.2" height="2.2" rx="0.5" fill="#b9ee92"/><rect x="0.95" y="3.03" width="2.2" height="2.2" rx="0.5" fill="#b9ee92"/><rect x="4.01" y="0.41" width="2.2" height="2.2" rx="0.5" fill="#b9ee92"/></svg>
<span class="t" style="left:850.25px;top:680px;font-size:14px;line-height:14px;color:#7bd148;letter-spacing:0.242px;">Running</span>
<span class="t" style="left:928.25px;top:680px;font-size:14px;line-height:14px;letter-spacing:0.207px;">00:22:27</span>
<span class="t b" style="left:1027.25px;top:680px;font-size:14px;line-height:14px;color:#5b90ee;transform:scaleX(1.247);">0/5</span>
<span class="t" style="left:1128.25px;top:680px;font-size:14px;line-height:14px;letter-spacing:0.120px;">22m 57s ago</span>
<div style="left:1128.75px;top:696px;width:82.0px;height:1px;background:repeating-linear-gradient(90deg,#dcdee5 0 2.4px,transparent 2.4px 5.85px)"></div>
<span class="t" style="left:1233.25px;top:680px;font-size:14px;line-height:14px;">-</span>
<div style="left:1233.45px;top:696px;width:1.3px;height:1px;background:#dcdee5"></div><div style="left:1237.65px;top:696px;width:1.3px;height:1px;background:#dcdee5"></div>
<span class="t" style="left:728.75px;top:713px;font-size:14px;line-height:14px;">5</span>
<svg style="left:827.9px;top:712.0px;" width="16" height="16" viewBox="0 0 16 16"><path d="M8.2 0.90A7.1 7.1 0 0 1 8.2 15.10" fill="none" stroke="#7bd148" stroke-width="2.1"/><rect x="4.01" y="13.39" width="2.2" height="2.2" rx="0.5" fill="#b9ee92"/><rect x="0.95" y="10.77" width="2.2" height="2.2" rx="0.5" fill="#b9ee92"/><rect x="-0.20" y="6.90" width="2.2" height="2.2" rx="0.5" fill="#b9ee92"/><rect x="0.95" y="3.03" width="2.2" height="2.2" rx="0.5" fill="#b9ee92"/><rect x="4.01" y="0.41" width="2.2" height="2.2" rx="0.5" fill="#b9ee92"/></svg>
<span class="t" style="left:850.25px;top:713px;font-size:14px;line-height:14px;color:#7bd148;letter-spacing:0.242px;">Running</span>
<span class="t" style="left:928.25px;top:713px;font-size:14px;line-height:14px;letter-spacing:0.207px;">00:22:26</span>
<span class="t b" style="left:1027.25px;top:713px;font-size:14px;line-height:14px;color:#5b90ee;transform:scaleX(1.247);">0/5</span>
<span class="t" style="left:1128.25px;top:713px;font-size:14px;line-height:14px;letter-spacing:0.120px;">22m 55s ago</span>
<div style="left:1128.75px;top:729px;width:82.0px;height:1px;background:repeating-linear-gradient(90deg,#dcdee5 0 2.4px,transparent 2.4px 5.85px)"></div>
<span class="t" style="left:1233.25px;top:713px;font-size:14px;line-height:14px;">-</span>
<div style="left:1233.45px;top:729px;width:1.3px;height:1px;background:#dcdee5"></div><div style="left:1237.65px;top:729px;width:1.3px;height:1px;background:#dcdee5"></div>
<span class="t" style="left:728.75px;top:746px;font-size:14px;line-height:14px;">6</span>
<svg style="left:827.9px;top:745.0px;" width="16" height="16" viewBox="0 0 16 16"><path d="M8.2 0.90A7.1 7.1 0 0 1 8.2 15.10" fill="none" stroke="#7bd148" stroke-width="2.1"/><rect x="4.01" y="13.39" width="2.2" height="2.2" rx="0.5" fill="#b9ee92"/><rect x="0.95" y="10.77" width="2.2" height="2.2" rx="0.5" fill="#b9ee92"/><rect x="-0.20" y="6.90" width="2.2" height="2.2" rx="0.5" fill="#b9ee92"/><rect x="0.95" y="3.03" width="2.2" height="2.2" rx="0.5" fill="#b9ee92"/><rect x="4.01" y="0.41" width="2.2" height="2.2" rx="0.5" fill="#b9ee92"/></svg>
<span class="t" style="left:850.25px;top:746px;font-size:14px;line-height:14px;color:#7bd148;letter-spacing:0.242px;">Running</span>
<span class="t" style="left:928.25px;top:746px;font-size:14px;line-height:14px;letter-spacing:0.207px;">00:22:25</span>
<span class="t b" style="left:1027.25px;top:746px;font-size:14px;line-height:14px;color:#5b90ee;transform:scaleX(1.247);">0/5</span>
<span class="t" style="left:1128.25px;top:746px;font-size:14px;line-height:14px;letter-spacing:0.120px;">22m 55s ago</span>
<div style="left:1128.75px;top:762px;width:82.0px;height:1px;background:repeating-linear-gradient(90deg,#dcdee5 0 2.4px,transparent 2.4px 5.85px)"></div>
<span class="t" style="left:1233.25px;top:746px;font-size:14px;line-height:14px;">-</span>
<div style="left:1233.45px;top:762px;width:1.3px;height:1px;background:#dcdee5"></div><div style="left:1237.65px;top:762px;width:1.3px;height:1px;background:#dcdee5"></div>
<span class="t" style="left:728.75px;top:779px;font-size:14px;line-height:14px;">7</span>
<svg style="left:827.9px;top:778.0px;" width="16" height="16" viewBox="0 0 16 16"><path d="M8.2 0.90A7.1 7.1 0 0 1 8.2 15.10" fill="none" stroke="#7bd148" stroke-width="2.1"/><rect x="4.01" y="13.39" width="2.2" height="2.2" rx="0.5" fill="#b9ee92"/><rect x="0.95" y="10.77" width="2.2" height="2.2" rx="0.5" fill="#b9ee92"/><rect x="-0.20" y="6.90" width="2.2" height="2.2" rx="0.5" fill="#b9ee92"/><rect x="0.95" y="3.03" width="2.2" height="2.2" rx="0.5" fill="#b9ee92"/><rect x="4.01" y="0.41" width="2.2" height="2.2" rx="0.5" fill="#b9ee92"/></svg>
<span class="t" style="left:850.25px;top:779px;font-size:14px;line-height:14px;color:#7bd148;letter-spacing:0.242px;">Running</span>
<span class="t" style="left:928.25px;top:779px;font-size:14px;line-height:14px;letter-spacing:0.207px;">00:22:25</span>
<span class="t b" style="left:1027.25px;top:779px;font-size:14px;line-height:14px;color:#5b90ee;transform:scaleX(1.247);">0/5</span>
<span class="t" style="left:1128.25px;top:779px;font-size:14px;line-height:14px;letter-spacing:0.120px;">22m 54s ago</span>
<div style="left:1128.75px;top:795px;width:82.0px;height:1px;background:repeating-linear-gradient(90deg,#dcdee5 0 2.4px,transparent 2.4px 5.85px)"></div>
<span class="t" style="left:1233.25px;top:779px;font-size:14px;line-height:14px;">-</span>
<div style="left:1233.45px;top:795px;width:1.3px;height:1px;background:#dcdee5"></div><div style="left:1237.65px;top:795px;width:1.3px;height:1px;background:#dcdee5"></div>
<span class="t" style="left:728.75px;top:812px;font-size:14px;line-height:14px;">8</span>
<svg style="left:827.9px;top:811.0px;" width="16" height="16" viewBox="0 0 16 16"><path d="M8.2 0.90A7.1 7.1 0 0 1 8.2 15.10" fill="none" stroke="#7bd148" stroke-width="2.1"/><rect x="4.01" y="13.39" width="2.2" height="2.2" rx="0.5" fill="#b9ee92"/><rect x="0.95" y="10.77" width="2.2" height="2.2" rx="0.5" fill="#b9ee92"/><rect x="-0.20" y="6.90" width="2.2" height="2.2" rx="0.5" fill="#b9ee92"/><rect x="0.95" y="3.03" width="2.2" height="2.2" rx="0.5" fill="#b9ee92"/><rect x="4.01" y="0.41" width="2.2" height="2.2" rx="0.5" fill="#b9ee92"/></svg>
<span class="t" style="left:850.25px;top:812px;font-size:14px;line-height:14px;color:#7bd148;letter-spacing:0.242px;">Running</span>
<span class="t" style="left:928.25px;top:812px;font-size:14px;line-height:14px;letter-spacing:0.207px;">00:22:24</span>
<span class="t b" style="left:1027.25px;top:812px;font-size:14px;line-height:14px;color:#5b90ee;transform:scaleX(1.247);">0/5</span>
<span class="t" style="left:1128.25px;top:812px;font-size:14px;line-height:14px;letter-spacing:0.120px;">22m 54s ago</span>
<div style="left:1128.75px;top:828px;width:82.0px;height:1px;background:repeating-linear-gradient(90deg,#dcdee5 0 2.4px,transparent 2.4px 5.85px)"></div>
<span class="t" style="left:1233.25px;top:812px;font-size:14px;line-height:14px;">-</span>
<div style="left:1233.45px;top:828px;width:1.3px;height:1px;background:#dcdee5"></div><div style="left:1237.65px;top:828px;width:1.3px;height:1px;background:#dcdee5"></div>
<div style="left:1250px;top:543px;width:17px;height:290px;background:#16171b"></div>
<svg style="left:1253.5px;top:546.6px;" width="10" height="8" viewBox="0 0 10 8"><path d="M1 6.6L5 2L9 6.6" fill="none" stroke="#fff" stroke-width="1.9"/></svg>
<div style="left:1250px;top:560px;width:17px;height:29px;background:#606c7c"></div>
</section>
<div style="left:0px;top:827px;width:1347px;height:1px;background:#37383c"></div>
<div style="left:0px;top:828px;width:1347px;height:2px;background:#131417"></div>
</body></html>
